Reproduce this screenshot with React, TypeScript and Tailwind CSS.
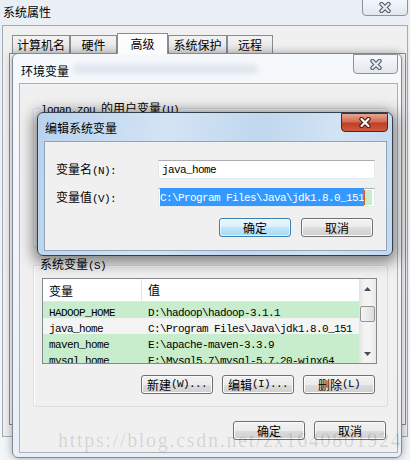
import React from "react";

const cjk = "font-['Noto_Sans_CJK_SC',sans-serif]";

// SimSun style half-width latin: 6px a char
const A = ({ children }: { children: React.ReactNode }) => (
  <span className="font-['Liberation_Mono',monospace] text-[11px] tracking-[-0.6px]">{children}</span>
);

const CloseX = ({ red }: { red?: boolean }) => (
  <svg width="14" height="11" viewBox="0 0 14 11">
    <path d="M3.5 2 L10.5 9 M10.5 2 L3.5 9" stroke={red ? "#4a1a12" : "#4f5b6a"} strokeWidth="4.4" strokeLinecap="round" />
    <path d="M3.5 2 L10.5 9 M10.5 2 L3.5 9" stroke={red ? "#ffffff" : "#e9edf2"} strokeWidth="2.2" strokeLinecap="round" />
  </svg>
);

const Btn = ({ children, focus }: { children: React.ReactNode; focus?: boolean }) => (
  <div
    className={
      focus
        ? `flex h-[19px] w-[72px] items-center justify-center rounded-[3px] border border-[#3c7fb1] bg-[linear-gradient(#eaf6fd,#d9f0fc_50%,#bee6fd_50%,#a7d9f5)] shadow-[inset_0_0_0_1px_#ffffffa0] text-[12px] leading-none ${cjk}`
        : `flex h-[19px] w-[72px] items-center justify-center rounded-[3px] border border-[#707070] bg-[linear-gradient(#f2f2f2,#ebebeb_50%,#dddddd_50%,#cfcfcf)] shadow-[inset_0_0_0_1px_#fcfcfc] text-[12px] leading-none ${cjk}`
    }
  >
    <span className="flex items-center">{children}</span>
  </div>
);

const Arrow = ({ up }: { up?: boolean }) => (
  <svg width="7" height="4" viewBox="0 0 7 4">
    <path d={up ? "M0 4 L3.5 0 L7 4 Z" : "M0 0 L3.5 4 L7 0 Z"} fill="#4d4d4d" />
  </svg>
);

function SystemProperties() {
  const tabs = [
    { label: "计算机名", w: "w-[58px]" },
    { label: "硬件", w: "w-[47px]" },
    { label: "高级", w: "w-[51px]", active: true },
    { label: "系统保护", w: "w-[59px]" },
    { label: "远程", w: "w-[46px]" },
  ];
  return (
    <div className="absolute inset-0">
      <div className={`absolute left-[3px] top-[4px] text-[12px] leading-[16px] ${cjk}`}>系统属性</div>
      <div className="absolute right-[2px] top-[-4px] flex h-[20px] w-[46px] items-center justify-center rounded-b-[4px] border border-[#8d939b] bg-[linear-gradient(#f8fafc,#e2e7ee)] pt-[3px]">
        <CloseX />
      </div>
      <div className="absolute bottom-[23px] left-[2px] right-[2px] top-[25px] border border-[#a3acb6] bg-[#f0f0f0]">
        <div className="flex h-[27px] items-end pl-[9px]">
          {tabs.map((t) =>
            t.active ? (
              <div
                key={t.label}
                className={`relative z-10 -mb-px flex h-[21px] ${t.w} items-center justify-center border border-b-0 border-[#898c95] bg-[#fcfcfc] text-[12px] ${cjk}`}
              >
                {t.label}
              </div>
            ) : (
              <div
                key={t.label}
                className={`flex h-[18px] ${t.w} items-center justify-center border border-b-0 border-[#898c95] bg-[linear-gradient(#f3f3f3,#e3e3e3)] text-[12px] ${cjk}`}
              >
                {t.label}
              </div>
            )
          )}
        </div>
        <div className="ml-[6px] mr-[1px] h-[372px] border border-[#898c95] bg-[#fcfcfc]" />
      </div>
    </div>
  );
}

const rows = [
  ["HADOOP_HOME", "D:\\hadoop\\hadoop-3.1.1"],
  ["java_home", "C:\\Program Files\\Java\\jdk1.8.0_151"],
  ["maven_home", "E:\\apache-maven-3.3.9"],
  ["mysql_home", "E:\\Mysql5.7\\mysql-5.7.20-winx64"],
];

function VarList() {
  return (
    <div className="ml-[8px] mt-[12px] flex h-[86px] w-[335px] overflow-hidden border border-[#828790] bg-white">
      <div className="w-[316px]">
        <div className={`flex h-[23px] items-center border-b border-[#e5e5e5] text-[12px] ${cjk}`}>
          <div className="h-full w-[99px] border-r border-[#e5e5e5] pl-[6px] leading-[23px]">变量</div>
          <div className="pl-[6px]">值</div>
        </div>
        {rows.map(([k, v], i) => (
          <div
            key={k}
            className={
              i === 1
                ? "flex h-[16px] items-center bg-[#f4f4f4] whitespace-nowrap"
                : "flex h-[16px] items-center bg-[#c7edcc] whitespace-nowrap"
            }
          >
            <div className="w-[99px] pl-[6px]">
              <A>{k}</A>
            </div>
            <div className="pl-[6px]">
              <A>{v}</A>
            </div>
          </div>
        ))}
      </div>
      <div className="flex w-[17px] flex-col bg-[linear-gradient(90deg,#e3e3e3,#f3f3f3_30%,#f3f3f3_70%,#e8e8e8)]">
        <div className="flex h-[17px] items-center justify-center pt-[3px]">
          <Arrow up />
        </div>
        <div className="mx-[1px] mt-[10px] h-[16px] rounded-[2px] border border-[#959595] bg-[linear-gradient(90deg,#f4f4f4,#e9e9e9_50%,#dcdcdc)]" />
        <div className="flex-1" />
        <div className="flex h-[17px] items-center justify-center pb-[2px]">
          <Arrow />
        </div>
      </div>
    </div>
  );
}

function EnvironmentWindow() {
  return (
    <div className="absolute left-[12px] top-[53px] h-[405px] w-[390px] rounded-[6px] border border-[#7f8a96] bg-[linear-gradient(180deg,#f6f9fc,#e9eff6)] shadow-[0_0_8px_rgba(0,0,0,0.35)]">
      <div className={`absolute left-[8px] top-[9px] text-[12px] leading-[16px] ${cjk}`}>环境变量</div>
      <div className="absolute left-[60px] top-[11px] h-[8px] w-[185px] rounded-full bg-[#c9d3df] opacity-60 blur-[3px]" />
      <div className="absolute right-[3px] top-[0px] flex h-[20px] w-[45px] items-center justify-center rounded-b-[4px] border border-[#8d939b] bg-[linear-gradient(#f8fafc,#e2e7ee)]">
        <CloseX />
      </div>
      <div className="absolute bottom-[4px] left-[6px] right-[3px] top-[29px] border border-[#a7b1bc] bg-[#f0f0f0]">
        <div className="relative ml-[13px] mt-[24px] h-[140px] w-[355px] rounded-[3px] border border-[#d5dfe5] shadow-[inset_1px_1px_0_#fff]">
          <div className="absolute left-[6px] top-[-9px] bg-[#f0f0f0] px-[1px] text-[12px] leading-[16px] whitespace-nowrap">
            <A>logan.zou </A>
            <span className={cjk}>的用户变量</span>
            <A>(U)</A>
          </div>
        </div>
        <div className="relative ml-[13px] mt-[17px] h-[142px] w-[355px] rounded-[3px] border border-[#d5dfe5] shadow-[inset_1px_1px_0_#fff]">
          <div className="absolute left-[6px] top-[-10px] bg-[#f0f0f0] text-[12px] leading-[16px] whitespace-nowrap">
            <span className={cjk}>系统变量</span>
            <A>(S)</A>
          </div>
          <VarList />
          <div className="mt-[11px] flex justify-end gap-[9px] pr-[12px]">
            <Btn>
              <span>新建</span>
              <A>(W)...</A>
            </Btn>
            <Btn>
              <span>编辑</span>
              <A>(I)...</A>
            </Btn>
            <Btn>
              <span>删除</span>
              <A>(L)</A>
            </Btn>
          </div>
        </div>
        <div className="mt-[14px] flex justify-end gap-[9px] pr-[11px]">
          <Btn>确定</Btn>
          <Btn>取消</Btn>
        </div>
      </div>
    </div>
  );
}

function EditDialog() {
  return (
    <div className="absolute left-[37px] top-[112px] h-[144px] w-[356px] rounded-[6px] border border-[#35404d] bg-[linear-gradient(100deg,#b9d2ec,#d3e4f5_35%,#c0d7ee_60%,#d2e3f4_80%,#c3d9ef)] shadow-[0_3px_14px_4px_rgba(0,0,0,0.45)]">
      <div className={`absolute left-[7px] top-[7px] text-[12px] leading-[16px] ${cjk}`}>编辑系统变量</div>
      <div className="absolute right-[4px] top-[0px] flex h-[19px] w-[47px] items-center justify-center rounded-b-[4px] border border-[#5b2119] bg-[linear-gradient(#eaa591,#d36b52_45%,#c23f26_55%,#d0593e)]">
        <CloseX red />
      </div>
      <div className="absolute bottom-[4px] left-[6px] right-[5px] top-[28px] border border-[#8fa4bb] bg-[#f0f0f0]">
        <div className="mt-[18px] flex items-center">
          <div className="w-[113px] pl-[11px] text-[12px] whitespace-nowrap">
            <span className={cjk}>变量名</span>
            <A>(N):</A>
          </div>
          <div className="flex h-[19px] w-[217px] items-center border border-[#e3e9ef] border-t-[#abadb3] bg-white pl-[3px]">
            <A>java_home</A>
          </div>
        </div>
        <div className="mt-[8px] flex items-center">
          <div className="w-[113px] pl-[11px] text-[12px] whitespace-nowrap">
            <span className={cjk}>变量值</span>
            <A>(V):</A>
          </div>
          <div className="flex h-[19px] w-[217px] items-center border border-[#e3e9ef] border-t-[#abadb3] bg-white pl-[1px] whitespace-nowrap">
            <span className="bg-[#3399ff] text-white leading-[15px]">
              <A>C:\Program Files\Java\jdk1.8.0_151</A>
            </span>
            <span className="h-[15px] w-[1px] bg-[#d0602a]" />
            <span className="h-[15px] w-[7px] bg-[#c7edcc]" />
          </div>
        </div>
        <div className="mt-[11px] flex justify-end gap-[10px] pr-[13px]">
          <Btn focus>确定</Btn>
          <Btn>取消</Btn>
        </div>
      </div>
    </div>
  );
}

export default function App() {
  return (
    <div className="relative h-[460px] w-[410px] overflow-hidden bg-[linear-gradient(180deg,#e9eff5,#f3f6f9)] text-black">
      <SystemProperties />
      <EnvironmentWindow />
      <EditDialog />
      <div className="pointer-events-none absolute left-[58px] top-[430px] whitespace-nowrap font-['Liberation_Serif',serif] text-[20px] leading-[20px] tracking-[1.7px] text-[rgba(0,0,0,0.13)]">
        https://blog.csdn.net/zx1640801924
      </div>
    </div>
  );
}
